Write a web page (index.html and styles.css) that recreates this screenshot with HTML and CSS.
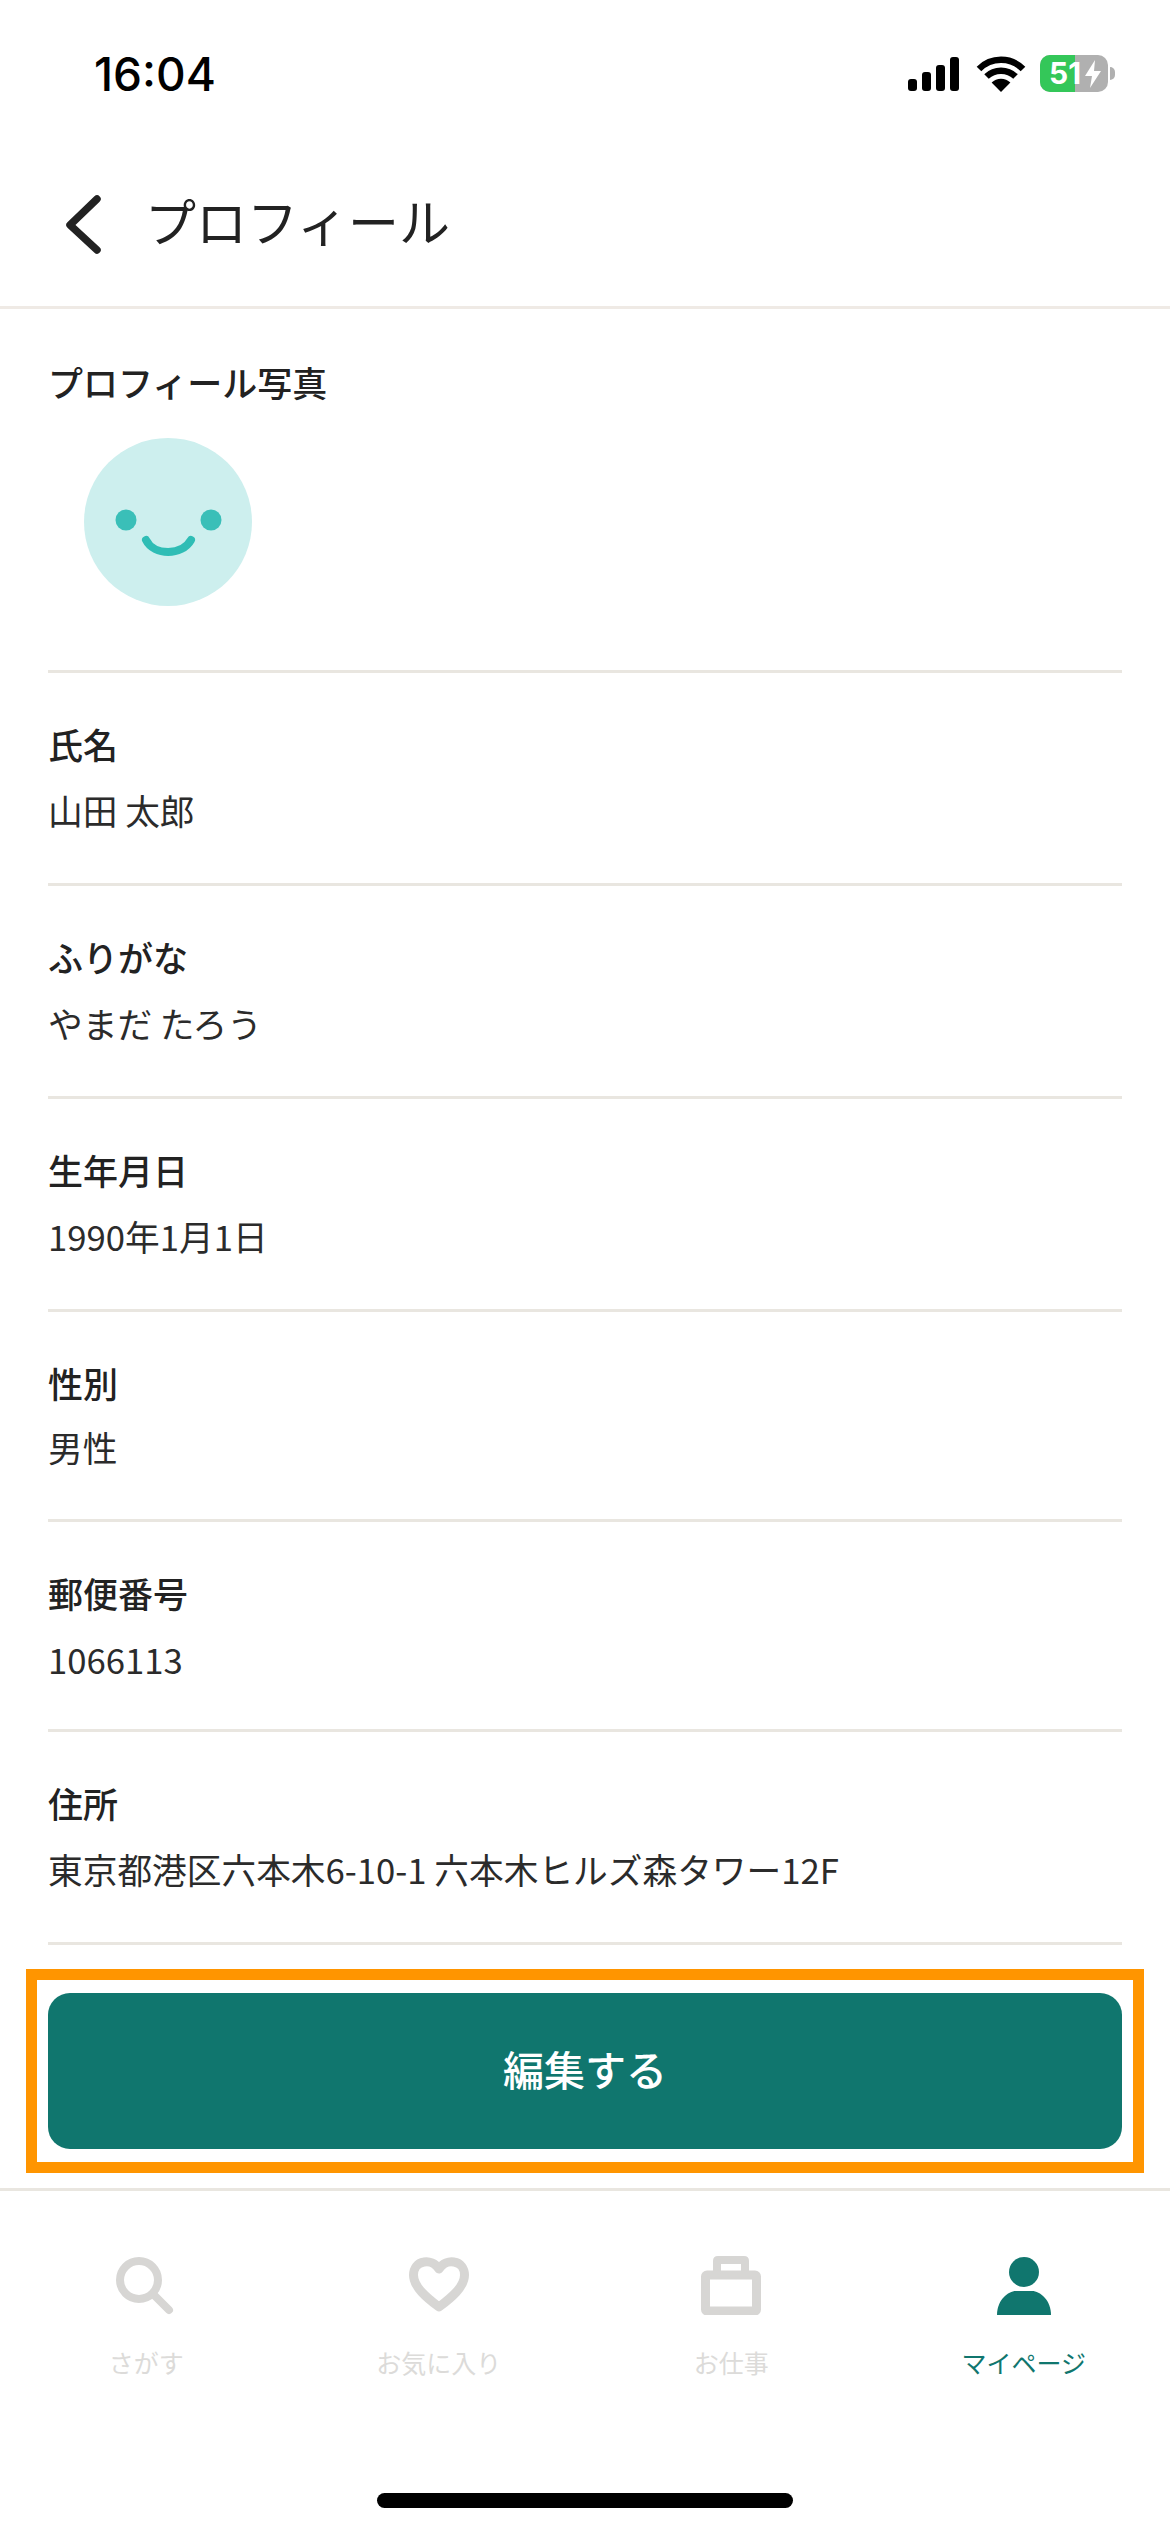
FILE: index.html
```html
<!DOCTYPE html>
<html lang="ja">
<head>
<meta charset="utf-8">
<title>プロフィール</title>
<link rel="stylesheet" href="styles.css">
</head>
<body>
<div class="screen">
  <div class="status">
    <span class="time">16:04</span>
    <div class="status-icons">
      <svg class="signal" width="52" height="36" viewBox="0 0 52 36"><rect x="0" y="23" width="9" height="12" rx="3"/><rect x="14" y="16" width="9" height="19" rx="3"/><rect x="28" y="9" width="9" height="26" rx="3"/><rect x="42" y="1" width="9" height="34" rx="3"/></svg>
      <svg class="wifi" width="50" height="38" viewBox="0 0 50 38"><path d="M25 37 L15.6 27.6 A13.5 13.5 0 0 1 34.4 27.6 Z"/><path d="M3 14 A31 31 0 0 1 47 14" fill="none" stroke="#000" stroke-width="6.5"/><path d="M10.5 21.5 A21 21 0 0 1 39.5 21.5" fill="none" stroke="#000" stroke-width="6.5"/></svg>
      <div class="battery">
        <div class="battery-body">
          <div class="battery-fill"></div>
          <span class="battery-num">51</span>
          <svg class="bolt" width="18" height="28" viewBox="0 0 18 28"><path d="M11 0 L1 16 H8 L6 28 L17 11 H10 Z" fill="#fff"/></svg>
        </div>
        <div class="battery-nub"></div>
      </div>
    </div>
  </div>

  <header class="nav">
    <svg class="back" width="40" height="60" viewBox="0 0 40 60"><path d="M33 5 L6 31 L33 56" fill="none" stroke="#222" stroke-width="7.5" stroke-linecap="round" stroke-linejoin="round"/></svg>
    <h1 class="title">プロフィール</h1>
  </header>

  <main class="content">
    <section class="row row-photo">
      <div class="label">プロフィール写真</div>
      <svg class="avatar" width="168" height="168" viewBox="0 0 168 168">
        <circle cx="84" cy="84" r="84" fill="#cdefee"/>
        <circle cx="42" cy="82" r="10.5" fill="#3abfb8"/>
        <circle cx="127" cy="82" r="10.5" fill="#3abfb8"/>
        <path d="M62 102 C70 118 98 118 107 102" fill="none" stroke="#2fbdb5" stroke-width="8" stroke-linecap="round"/>
      </svg>
    </section>
    <section class="row"><div class="label">氏名</div><div class="value">山田 太郎</div></section>
    <section class="row"><div class="label">ふりがな</div><div class="value">やまだ たろう</div></section>
    <section class="row"><div class="label">生年月日</div><div class="value">1990年1月1日</div></section>
    <section class="row row-short row-tight"><div class="label">性別</div><div class="value">男性</div></section>
    <section class="row row-short"><div class="label">郵便番号</div><div class="value">1066113</div></section>
    <section class="row"><div class="label">住所</div><div class="value">東京都港区六本木6-10-1 六本木ヒルズ森タワー12F</div></section>
  </main>

  <div class="action">
    <button class="edit">編集する</button>
    <div class="highlight"></div>
  </div>

  <nav class="tabs">
    <div class="tab">
      <svg class="tab-icon" width="60" height="60" viewBox="0 0 60 60"><circle cx="23" cy="25" r="19" fill="none" stroke="#d7d6d4" stroke-width="8"/><path d="M37 39 L53 55" stroke="#d7d6d4" stroke-width="8" stroke-linecap="round"/></svg>
      <span class="tab-label">さがす</span>
    </div>
    <div class="tab">
      <svg class="tab-icon" width="60" height="60" viewBox="0 0 60 60"><path d="M30 14 C26 8 20 6 15 7 C8 8 4.500 14 4.500 20 C4.500 32 18 43 30 52 C42 43 55.500 32 55.500 20 C55.500 14 52 8 45 7 C40 6 34 8 30 14 Z" fill="none" stroke="#d7d6d4" stroke-width="9" stroke-linejoin="round"/></svg>
      <span class="tab-label">お気に入り</span>
    </div>
    <div class="tab">
      <svg class="tab-icon" width="60" height="60" viewBox="0 0 60 60"><path d="M16 17 V6 Q16 5 17 5 H43 Q44 5 44 6 V17" fill="none" stroke="#d7d6d4" stroke-width="8"/><rect x="4.500" y="20" width="51" height="36" rx="1.500" fill="none" stroke="#d7d6d4" stroke-width="9"/></svg>
      <span class="tab-label">お仕事</span>
    </div>
    <div class="tab tab-active">
      <svg class="tab-icon" width="60" height="60" viewBox="0 0 60 60"><circle cx="30" cy="17" r="15" fill="#10766e"/><path d="M3 62 C3 47 14 38 22 38 H38 C46 38 57 47 57 62 Z" transform="translate(0 -2)" fill="#10766e"/></svg>
      <span class="tab-label">マイページ</span>
    </div>
  </nav>

  <div class="home-bar"><div class="home-indicator"></div></div>
</div>
</body>
</html>
```
FILE: styles.css
```css
* { box-sizing: border-box; }
html, body { margin: 0; padding: 0; background: #fff; }
body { font-family: "Noto Sans CJK JP", "Noto Sans", sans-serif; color: #222; }
.screen { width: 1170px; height: 2532px; display: flex; flex-direction: column; overflow: hidden; }

.status { height: 150px; padding: 48px 55px 0 94px; display: flex; justify-content: space-between; align-items: flex-start; }
.time { font-family: Inter, "Liberation Sans", sans-serif; font-weight: 500; font-size: 46px; line-height: 52px; color: #000; }
.status-icons { display: flex; align-items: flex-start; gap: 14px; padding-top: 7px; }
.signal { fill: #000; margin: 1px 2px 0 0; }
.wifi { fill: #000; }
.battery { display: flex; align-items: center; gap: 2px; }
.battery-body { position: relative; width: 68px; height: 37px; border-radius: 10px; background: #b0b0b0; overflow: hidden; }
.battery-fill { position: absolute; left: 0; top: 0; bottom: 0; width: 35px; background: #34c759; }
.battery-num { position: absolute; left: 9px; top: 0; font-family: Inter, "Liberation Sans", sans-serif; font-weight: 700; font-size: 30px; line-height: 37px; color: #fff; }
.bolt { position: absolute; left: 44px; top: 5px; }
.battery-nub { width: 5px; height: 13px; background: #b0b0b0; border-radius: 0 6px 6px 0; }

.nav { height: 159px; display: flex; align-items: center; gap: 41px; padding: 0 0 8px 64px; border-bottom: 3px solid #efeae5; }
.back { flex: none; }
.title { margin: 0 0 8px; font-size: 51px; font-weight: 400; color: #222; line-height: 60px; }

.content { display: flex; flex-direction: column; padding: 0 48px; }
.row { height: 213px; padding-top: 45px; border-bottom: 3px solid #e9e6e0; }
.row-short { height: 210px; }
.row-photo { height: 364px; padding-top: 47px; }
.label { font-size: 35px; font-weight: 500; line-height: 52px; color: #222; }
.value { margin-top: 14px; font-size: 34.700px; font-weight: 400; line-height: 52px; color: #2b2b2b; }
.row-tight .value { margin-top: 12px; }
.avatar { display: block; margin: 30px 0 0 36px; }

.action { position: relative; height: 246px; padding: 48px 48px 0; border-bottom: 3px solid #e9e6e0; }
.edit { display: block; width: 100%; height: 156px; padding: 0 0 6px; border: 0; border-radius: 22px; background: #10766e; color: #fff; font-family: inherit; font-size: 41px; font-weight: 500; }
.highlight { position: absolute; left: 26px; right: 26px; top: 24px; height: 204px; border: 11px solid #ff9500; }

.tabs { display: flex; padding-top: 64px; }
.tab { flex: 1; display: flex; flex-direction: column; align-items: center; }
.tab-icon { display: block; }
.tab-label { margin-top: 29px; font-size: 25px; line-height: 36px; color: #dcdbd9; }
.tab-active .tab-label { color: #10766e; }

.home-bar { margin-top: auto; height: 39px; display: flex; justify-content: center; }
.home-indicator { width: 416px; height: 15px; border-radius: 8px; background: #000; }
```
